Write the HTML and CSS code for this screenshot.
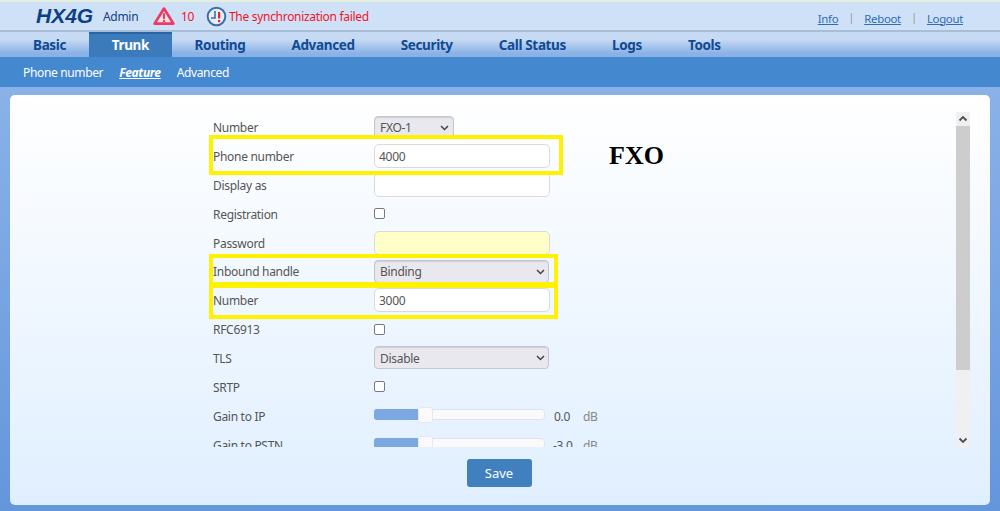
FILE: index.html
```html
<!DOCTYPE html>
<html lang="en">
<head>
<meta charset="utf-8">
<title>HX4G</title>
<link rel="stylesheet" href="styles.css">
</head>
<body>
<header class="top">
  <div class="brand">HX4G</div>
  <div class="admin">Admin</div>
  <svg class="tri" width="22" height="20" viewBox="0 0 23 20"><path d="M11.5 2.2 L21.3 18 H1.7 Z" fill="#f6e4ea" stroke="#ee3a62" stroke-width="2.8" stroke-linejoin="round"/><rect x="10.4" y="7" width="2.2" height="6" fill="#ee3a62"/><rect x="10.4" y="14" width="2.2" height="2.2" fill="#ee3a62"/></svg>
  <div class="count">10</div>
  <svg class="clock" width="21" height="21" viewBox="0 0 21 21"><circle cx="10.5" cy="10.5" r="8.8" fill="#e6eef8" stroke="#3f6ea8" stroke-width="2"/><path d="M9 5 V12 H5" fill="none" stroke="#3f6ea8" stroke-width="1.6"/><rect x="12" y="6" width="2.2" height="6.5" fill="#ee2030"/><rect x="12" y="14" width="2.2" height="2.2" fill="#ee2030"/></svg>
  <div class="sync">The synchronization failed</div>
  <nav class="links"><a href="#">Info</a><i>|</i><a href="#">Reboot</a><i>|</i><a href="#">Logout</a></nav>
</header>
<nav class="tabs">
  <a href="#">Basic</a><a href="#" class="on">Trunk</a><a href="#">Routing</a><a href="#">Advanced</a><a href="#">Security</a><a href="#">Call Status</a><a href="#">Logs</a><a href="#">Tools</a>
</nav>
<nav class="sub">
  <a href="#">Phone number</a><a href="#" class="cur">Feature</a><a href="#">Advanced</a>
</nav>
<main class="page">
  <section class="card">
    <div class="scroll">
      <form class="form">
        <div class="row"><label>Number</label><div class="fake-select short">FXO-1<svg width="9" height="6" viewBox="0 0 9 6"><path d="M1 1 L4.5 4.5 L8 1" fill="none" stroke="#444" stroke-width="1.5"/></svg></div></div>
        <div class="row"><label>Phone number</label><input class="text" value="4000"></div>
        <div class="row"><label>Display as</label><input class="text"></div>
        <div class="row"><label>Registration</label><span class="check"></span></div>
        <div class="row"><label>Password</label><input class="text pass"></div>
        <div class="row"><label>Inbound handle</label><div class="fake-select">Binding<svg width="9" height="6" viewBox="0 0 9 6"><path d="M1 1 L4.5 4.5 L8 1" fill="none" stroke="#444" stroke-width="1.5"/></svg></div></div>
        <div class="row"><label>Number</label><input class="text" value="3000"></div>
        <div class="row"><label>RFC6913</label><span class="check"></span></div>
        <div class="row"><label>TLS</label><div class="fake-select">Disable<svg width="9" height="6" viewBox="0 0 9 6"><path d="M1 1 L4.5 4.5 L8 1" fill="none" stroke="#444" stroke-width="1.5"/></svg></div></div>
        <div class="row"><label>SRTP</label><span class="check"></span></div>
        <div class="row"><label>Gain to IP</label><div class="slider"><b></b><s></s></div><span class="val">0.0</span><span class="unit">dB</span></div>
        <div class="row"><label>Gain to PSTN</label><div class="slider"><b></b><s></s></div><span class="val neg">-3.0</span><span class="unit">dB</span></div>
      </form>
      <div class="fxo">FXO</div>
      <div class="bar">
        <svg class="arrow" width="14" height="14" viewBox="0 0 14 14"><path d="M3.5 8.5 L7 5 L10.5 8.5" fill="none" stroke="#505050" stroke-width="1.8"/></svg>
        <div class="thumb"></div>
        <div class="rest"></div>
        <svg class="arrow" width="14" height="14" viewBox="0 0 14 14"><path d="M3.5 5.5 L7 9 L10.5 5.5" fill="none" stroke="#505050" stroke-width="1.8"/></svg>
      </div>
    </div>
    <div class="foot"><button class="save" type="button">Save</button></div>
  </section>
</main>
<div class="mark m1"></div>
<div class="mark m2"></div>
<div class="mark m3"></div>
</body>
</html>
```

FILE: styles.css
```css
* { box-sizing: border-box; }
html, body { margin: 0; height: 511px; overflow: hidden; }
body {
  font-family: "Noto Sans", "Open Sans", sans-serif;
  font-size: 12px;
  letter-spacing: -.3px;
  color: #555;
  display: flex;
  flex-direction: column;
  position: relative;
  background: #6c9bdd;
}
a { color: inherit; }

.top {
  height: 32px;
  flex: none;
  display: flex;
  align-items: center;
  padding-left: 36px;
  border-top: 2px solid #e4efe0;
  border-bottom: 2px solid #a8bdd8;
  background: #cfe1f6;
  color: #f0142a;
}
.brand { font: italic bold 21px "Liberation Sans", sans-serif; color: #0d3f85; width: 67px; letter-spacing: 0; }
.admin { color: #16427e; width: 50px; }
.tri { margin-right: 6px; }
.count { width: 25px; }
.clock { margin-right: 2px; }
.sync { flex: 1; }
.links { display: flex; color: #2f6cb5; font-size: 11.4px; padding-right: 37px; padding-top: 4px; }
.links i { font-style: normal; color: #999; width: 26px; text-align: center; position: relative; top: -2px; }

.tabs {
  height: 25px;
  flex: none;
  display: flex;
  padding-left: 10px;
  background: linear-gradient(#c6daf3 0 30%, #8ab2e6 85%);
}
.tabs a {
  padding: 0 23px;
  line-height: 27px;
  font-size: 13.5px;
  letter-spacing: -.35px;
  font-weight: 700;
  color: #104a92;
  text-decoration: none;
}
.tabs a.on { color: #fff; background: #3c7bbb; border-top: 2px solid #2a63a6; line-height: 23px; padding: 0 22.6px; }

.sub {
  height: 30px;
  flex: none;
  display: flex;
  gap: 16px;
  padding-left: 23px;
  align-items: center;
  background: #4488cf;
  color: #fff;
  letter-spacing: -.35px;
}
.sub a { text-decoration: none; }
.sub a.cur { font-weight: 700; font-style: italic; text-decoration: underline; }

.page {
  flex: 1;
  padding: 8px 10px 6px;
  background: linear-gradient(#8ab2e8, #6496dc);
}
.card {
  height: 410px;
  border-radius: 5px;
  background: linear-gradient(#fff, #e0efff);
  display: flex;
  flex-direction: column;
  padding-top: 17px;
}
.scroll {
  height: 335px;
  flex: none;
  display: flex;
  overflow: hidden;
  padding-left: 203px;
  padding-right: 20px;
}
.form { width: 396px; flex: none; padding-top: .8px; }
.row { height: 28.85px; display: flex; align-items: center; }
.row label { width: 161px; flex: none; padding-top: 1px; }
.text {
  width: 176px;
  height: 24px;
  border: 1px solid #d8dade;
  border-radius: 5px;
  padding: 0 4px;
  background: #fff;
  font: inherit;
  letter-spacing: inherit;
  color: #555;
  outline: none;
}
.pass { background: #ffffc8; }
.fake-select {
  width: 175px;
  height: 23px;
  display: flex;
  align-items: center;
  justify-content: space-between;
  padding: 1px 3px 0 5px;
  border: 1px solid #c4c6cc;
  border-radius: 4px;
  background: #e8e8ee;
  box-shadow: inset 0 1px 1px #cfcfd6;
}
.fake-select.short { width: 80px; padding-right: 4px; }
.check {
  width: 11px;
  height: 11px;
  border: 1.5px solid #77778a;
  border-radius: 2px;
  background: #fff;
}
.slider {
  width: 171px;
  height: 11px;
  position: relative;
  margin-bottom: 2px;
  border: 1px solid #e0e4ea;
  border-radius: 4px;
  background: #fafafa;
}
.slider b { position: absolute; left: -1px; top: -1px; bottom: -1px; width: 44px; background: #7ba8e0; border-radius: 3px 0 0 3px; }
.slider s { position: absolute; left: 43px; top: -3px; width: 15px; height: 16px; background: #fafafa; border: 1px solid #e8e8ec; border-radius: 3px; }
.val { margin-left: 9px; width: 29px; padding-top: 1px; }
.val.neg { margin-left: 8px; width: 30px; }
.unit { color: #888; padding-top: 1px; }

.fxo {
  font: bold 26px "Liberation Serif", serif;
  letter-spacing: 0;
  color: #000;
  padding-top: 29px;
  flex: 1;
}
.bar { width: 14px; flex: none; display: flex; flex-direction: column; background: #f0f0f0; }
.arrow { flex: none; display: block; }
.thumb { height: 244px; background: #cdcdcd; }
.rest { flex: 1; }

.foot { flex: 1; display: flex; justify-content: center; padding: 12px 2px 0 0; }
.save {
  width: 65px;
  height: 28px;
  border: 0;
  border-radius: 3px;
  background: #4180bf;
  color: #fff;
  font: inherit;
  font-size: 13px;
}

.mark { position: absolute; border: 4px solid #fff200; pointer-events: none; }
.m1 { left: 209px; top: 135px; width: 354px; height: 40px; }
.m2 { left: 209px; top: 254px; width: 349px; height: 32px; }
.m3 { left: 209px; top: 284px; width: 349px; height: 35px; }
```
